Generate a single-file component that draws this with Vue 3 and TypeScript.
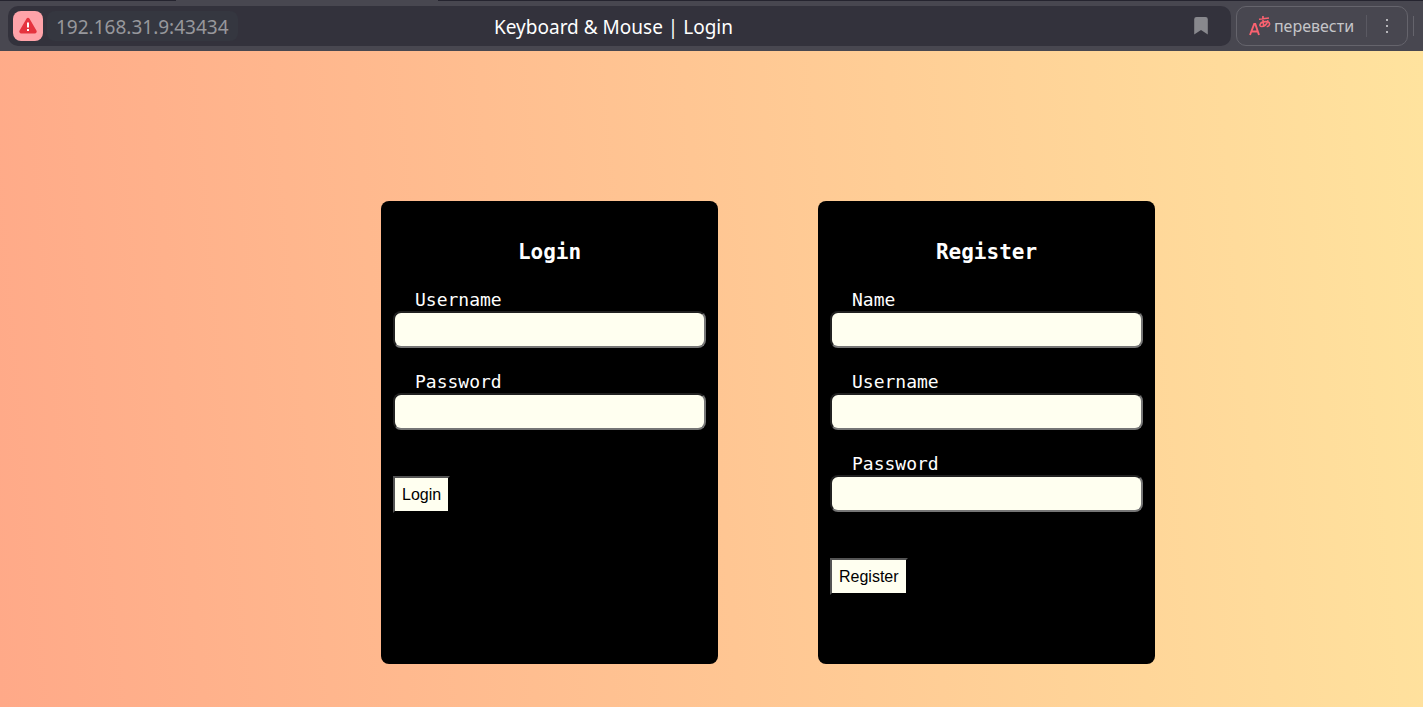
<script setup lang="ts">
interface Field {
  id: string
  label: string
  type: string
}

interface FormCard {
  title: string
  fields: Field[]
}

const cards: FormCard[] = [
  {
    title: 'Login',
    fields: [
      { id: 'login-username', label: 'Username', type: 'text' },
      { id: 'login-password', label: 'Password', type: 'password' },
    ],
  },
  {
    title: 'Register',
    fields: [
      { id: 'register-name', label: 'Name', type: 'text' },
      { id: 'register-username', label: 'Username', type: 'text' },
      { id: 'register-password', label: 'Password', type: 'password' },
    ],
  },
]
</script>

<template>
  <div class="window">
    <header class="browser">
      <div class="tabs"><span class="tab"></span></div>
      <div class="toolbar">
        <div class="address">
          <button class="warning" type="button" aria-label="Not secure">
            <svg width="18" height="18" viewBox="0 0 18 18">
              <path d="M7.6 1.6a1.7 1.7 0 0 1 2.8 0l7 12a1.9 1.9 0 0 1-1.7 2.9H2.3a1.9 1.9 0 0 1-1.7-2.9z" fill="#e5323e" />
              <path d="M8 5.5h2v5H8zM8 12h2v2H8z" fill="#fff" />
            </svg>
          </button>
          <span class="host">192.168.31.9:43434</span>
          <span class="page-title">Keyboard &amp; Mouse | Login</span>
          <button class="bookmark" type="button" aria-label="Bookmark">
            <svg width="14" height="18" viewBox="0 0 14 18">
              <path d="M2.5 0h9A2.3 2.3 0 0 1 13.8 2.3V17.6L7 13L.2 17.6V2.3A2.3 2.3 0 0 1 2.5 0z" fill="#88888d" />
            </svg>
          </button>
        </div>
        <div class="translate">
          <button class="translate-main" type="button">
            <svg width="22" height="20" viewBox="0 0 22 20" fill="none" stroke="#fb6270" stroke-width="1.9">
              <path d="M1 19L5.2 8h1.1L10 19M2.500 15.500h6.300" />
              <path d="M10 3.200l10-1.200M14 0c-.3 4-.1 7 1 10.500M19 4.200c-1 3.500-3.500 6.300-6.500 6.300-2.600 0-2-3.800 2-4.600 4-.8 6.500.2 6 2.600-.2 1.300-1.200 2-2.800 2.300" stroke-width="1.6" />
            </svg>
            <span>перевести</span>
          </button>
          <button class="more" type="button" aria-label="More">
            <svg width="4" height="16" viewBox="0 0 4 16" fill="#b6b6ba">
              <path d="M1 1h2v2H1zM1 7h2v2H1zM1 13h2v2H1z" />
            </svg>
          </button>
        </div>
        <span class="edge"></span>
      </div>
    </header>

    <main class="page">
      <form v-for="card in cards" :key="card.title" class="card" @submit.prevent>
        <h3>{{ card.title }}</h3>
        <div v-for="field in card.fields" :key="field.id" class="field">
          <label :for="field.id">{{ field.label }}</label>
          <input :id="field.id" :type="field.type" />
        </div>
        <button class="submit" type="submit">{{ card.title }}</button>
      </form>
    </main>
  </div>
</template>

<style>
body {
  margin: 0;
}
</style>

<style scoped>
.window {
  display: flex;
  flex-direction: column;
  min-height: 100vh;
}

.browser {
  background: #484750;
  font-family: "Noto Sans", "Open Sans", sans-serif;
}

.tabs {
  height: 1px;
  padding-left: 176px;
  background: #25242f;
}

.tab {
  display: block;
  width: 262px;
  height: 1px;
  background: #484750;
}

.toolbar {
  display: flex;
  align-items: center;
  gap: 5px;
  height: 40px;
  padding: 5px 9px 5px 8px;
}

.address {
  position: relative;
  display: flex;
  flex: 1;
  align-items: center;
  height: 40px;
  padding: 0 23px 0 5px;
  box-sizing: border-box;
  border-radius: 10px;
  background: #33323c;
}

button {
  display: flex;
  align-items: center;
  justify-content: center;
  padding: 0;
  border: 0;
  background: none;
}

.warning {
  width: 30px;
  height: 30px;
  border-radius: 8px;
  background: #ffa3a9;
}

.host {
  height: 30px;
  margin-left: 4px;
  padding: 0 9px;
  border-radius: 8px;
  background: #353740;
  color: #97979c;
  font-size: 19px;
  line-height: 32px;
}

.page-title {
  position: absolute;
  top: 5px;
  left: 0;
  right: 12px;
  color: #fff;
  font-size: 19px;
  line-height: 32px;
  text-align: center;
  pointer-events: none;
}

.bookmark {
  margin-left: auto;
}

.translate {
  display: flex;
  align-items: center;
  width: 172px;
  height: 40px;
  box-sizing: border-box;
  border: 1px solid #65646c;
  border-radius: 10px;
}

.translate-main {
  flex: 1;
  gap: 3px;
  height: 22px;
  border-right: 1px solid #5a5962;
  color: #c5c5c8;
  font-family: inherit;
  font-size: 16px;
}

.more {
  width: 40px;
  height: 30px;
}

.edge {
  width: 1px;
  height: 20px;
  background: #65646c;
}

.page {
  display: flex;
  flex: 1;
  align-items: flex-start;
  justify-content: center;
  gap: 100px;
  padding: 150px 0 43px 113px;
  background: linear-gradient(85deg, #ffa988, #ffe39e);
}

.card {
  width: 313px;
  min-height: 439px;
  padding: 12px;
  border-radius: 8px;
  background: #000;
  color: #fff;
  font-family: Consolas, "DejaVu Sans Mono", monospace;
}

h3 {
  margin: 25px 0 22px;
  font-size: 21px;
  line-height: 28px;
  text-align: center;
}

.field {
  margin-bottom: 22px;
}

label {
  display: block;
  padding-left: 22px;
  font-size: 18px;
  line-height: 23px;
}

input {
  display: block;
  width: 100%;
  height: 37px;
  padding: 4px 8px;
  box-sizing: border-box;
  border: 2px inset #767676;
  border-radius: 8px;
  background: #fffff0;
  font-size: 16px;
}

.submit {
  height: 37px;
  margin-top: 46px;
  padding: 0 7px;
  border: 2px outset #000;
  background: #fffff0;
  background-clip: padding-box;
  color: #000;
  font-family: "Liberation Sans", Arial, sans-serif;
  font-size: 16px;
}
</style>
